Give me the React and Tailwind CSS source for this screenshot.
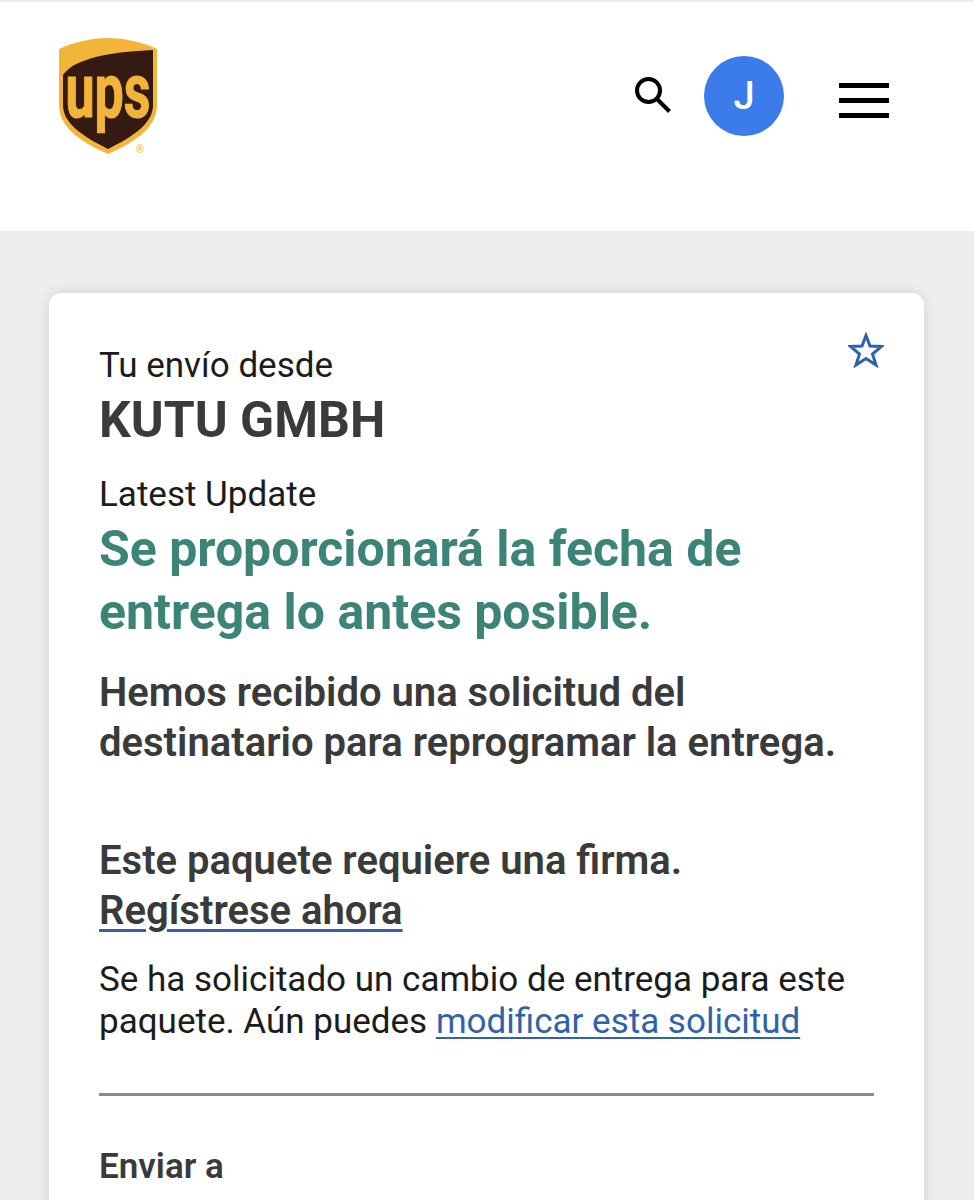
function UpsLogo() {
  return (
    <svg width="100" height="118" viewBox="0 0 100 118" className="block">
      <path d="M1 11 C16 4 33 0 50 0 C67 0 84 4 99 11 L99 67 C99 88 80 103 50 116 C20 103 1 88 1 67 Z" fill="#f3b43a" />
      <path d="M5 37 C12 27 30 15 95 12 L95 67 C95 85 76 98 50 111 C24 98 5 85 5 67 Z" fill="#341a12" />
      <text transform="translate(50 79) scale(1 1.45)" textAnchor="middle" fontFamily="Roboto, sans-serif" fontWeight="700" fontSize="52" stroke="#f3b43a" strokeWidth="0.8" fill="#f3b43a">ups</text>
    </svg>
  );
}

function SearchIcon() {
  return (
    <svg width="38" height="38" viewBox="0 0 38 38" fill="none" stroke="#000" strokeWidth="4" className="-translate-y-px">
      <circle cx="14.5" cy="14.5" r="11.5" />
      <path d="M23 23 L35.5 35.5" />
    </svg>
  );
}

function StarIcon() {
  return (
    <svg width="36" height="36" viewBox="0 0 36 36" fill="none" stroke="#2f62a8" strokeWidth="3" strokeLinejoin="miter">
      <path d="M18 3.5 L22 14 L33.5 14.5 L24.5 22 L28 33 L18 26.5 L8 33 L11.5 22 L2.5 14.5 L14 14 Z" />
    </svg>
  );
}

export default function App() {
  return (
    <div className="h-[1200px] overflow-hidden bg-[#eeeeee] font-['Roboto',sans-serif]">
      <header className="h-[231px] bg-white border-t-2 border-[#eeeeee] flex items-start justify-between pl-[58px] pr-[85px]">
        <div className="pt-[36px] relative">
          <UpsLogo />
          <span className="absolute left-[78px] top-[143px] text-[10px] leading-none text-[#f3b43a]">®</span>
        </div>
        <div className="flex items-center pt-[54px]">
          <SearchIcon />
          <div className="ml-[32px] w-[80px] h-[80px] rounded-full bg-[#3b7bea] text-white text-[38px] font-medium flex items-center justify-center">
            J
          </div>
          <div className="ml-[55px] mt-[8px] w-[50px] flex flex-col gap-[10px]">
            <div className="h-[5px] bg-black"></div>
            <div className="h-[5px] bg-black"></div>
            <div className="h-[5px] bg-black"></div>
          </div>
        </div>
      </header>

      <main className="pt-[62px] pl-[49px] pr-[50px]">
        <div className="relative bg-white rounded-[12px] shadow-[0_0_14px_rgba(0,0,0,0.12)] pl-[50px] pr-[50px] pt-[52px] pb-[40px]">
          <button className="absolute right-[40px] top-[39px]">
            <StarIcon />
          </button>

          <p className="text-[35px] leading-[42px] text-[#1c1c1c]">Tu envío desde</p>
          <h1 className="mt-[5px] text-[50px] leading-[56px] font-bold text-[#3a3a3a]">KUTU GMBH</h1>

          <p className="mt-[26px] text-[35px] leading-[42px] text-[#1c1c1c]">Latest Update</p>
          <h2 className="mt-[2px] text-[50px] leading-[63px] font-bold text-[#3c8478] whitespace-nowrap">
            Se proporcionará la fecha de<br />entrega lo antes posible.
          </h2>

          <p className="mt-[24px] text-[40px] leading-[50px] font-semibold text-[#3a3a3a] whitespace-nowrap">
            Hemos recibido una solicitud del<br />destinatario para reprogramar la entrega.
          </p>

          <p className="mt-[68px] text-[40px] leading-[50px] font-semibold text-[#3a3a3a]">
            Este paquete requiere una firma.<br />
            <a className="underline decoration-[#2f62a8] decoration-[3px] underline-offset-[5px]">Regístrese ahora</a>
          </p>

          <p className="mt-[23px] text-[35px] leading-[42px] text-[#1c1c1c] whitespace-nowrap">
            Se ha solicitado un cambio de entrega para este<br />
            paquete. Aún puedes{' '}
            <a className="text-[#2f62a8] underline decoration-[2px] underline-offset-[4px]">modificar esta solicitud</a>
          </p>

          <hr className="mt-[50px] border-0 h-[3px] bg-[#8e8c88]" />

          <p className="mt-[49px] text-[35px] leading-[44px] font-semibold text-[#3a3a3a]">Enviar a</p>
        </div>
      </main>
    </div>
  );
}
